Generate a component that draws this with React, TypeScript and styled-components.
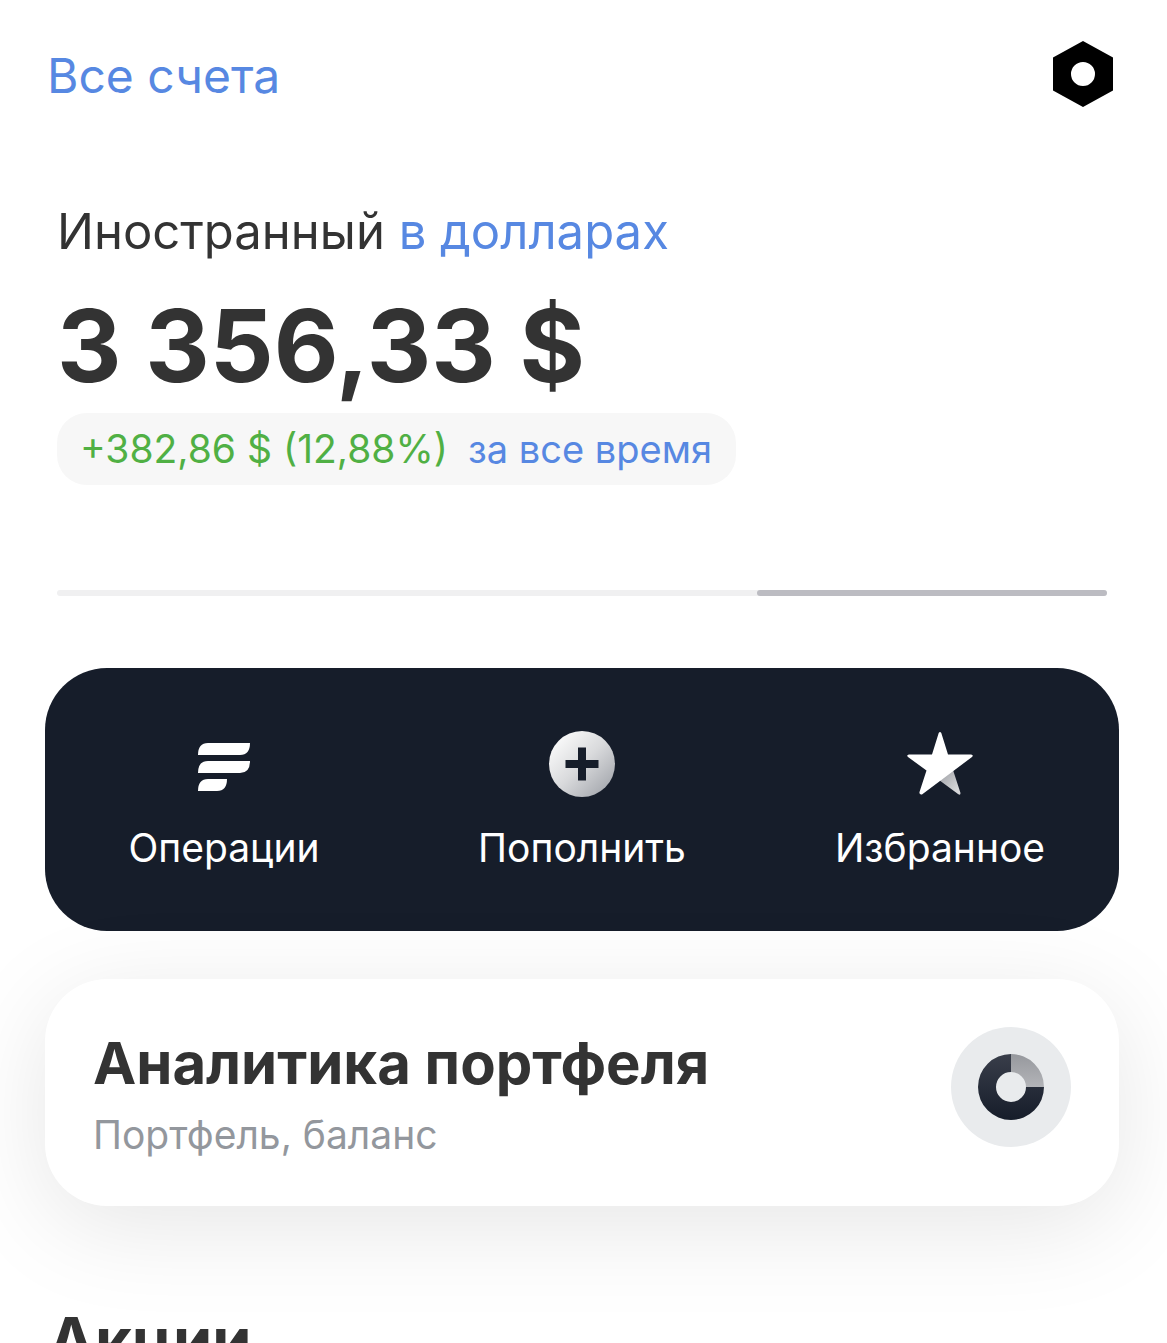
import React from "react";
import styled, { createGlobalStyle } from "styled-components";

const Global = createGlobalStyle`
  * { box-sizing: border-box; }
  html { height: 100%; overflow: hidden; }
  body { margin: 0; height: 100%; overflow: hidden; background: #fff; color: #333; font-family: Inter, "Liberation Sans", sans-serif; }
  h1, h2, p { margin: 0; }
  button { font: inherit; border: 0; padding: 0; background: none; cursor: pointer; }
`;

const Page = styled.main`
  padding: 40px 48px 0 45px;
`;

const TopBar = styled.header`
  display: flex;
  align-items: flex-start;
  justify-content: space-between;
  height: 68px;
  padding: 0 4px 0 2px;
`;

const LinkButton = styled.button`
  color: #5788e2;
`;

const BackButton = styled(LinkButton)`
  padding-top: 4px;
  && {
    font-size: 48px;
    line-height: 64px;
  }
`;

const IconButton = styled.button`
  display: flex;
`;

const Summary = styled.section`
  display: flex;
  flex-direction: column;
  align-items: flex-start;
  padding: 92px 12px 0;
`;

const Account = styled.p`
  font-size: 49px;
  line-height: 64px;
`;

const Balance = styled.h1`
  margin-top: 22px;
  font-size: 100px;
  line-height: 120px;
  font-weight: 700;
`;

const Gain = styled.div`
  display: flex;
  align-items: center;
  gap: 20px;
  height: 72px;
  margin-top: 7px;
  padding: 0 24px 0 23px;
  border-radius: 30px;
  background: #f7f7f7;
  color: #50b044;
  font-size: 39px;
  line-height: 48px;
`;

const Period = styled(LinkButton)`
  && { font-size: 38px; }
`;

const Pager = styled.div`
  display: grid;
  grid-template-columns: repeat(3, 1fr);
  height: 6px;
  margin: 105px 12px 0;
  border-radius: 3px;
  background: #f0f0f1;
`;

const PagerThumb = styled.span`
  grid-column: 3;
  border-radius: 3px;
  background: #bcbcc2;
`;

const Actions = styled.nav`
  display: grid;
  grid-template-columns: repeat(3, 1fr);
  margin-top: 72px;
  padding: 60px 0 59px;
  border-radius: 62px;
  background: #161d2a;
`;

const Action = styled.button`
  display: flex;
  flex-direction: column;
  align-items: center;
  gap: 24px;
  && {
    color: #fff;
    font-size: 39px;
    line-height: 48px;
  }
`;

const Card = styled.section`
  display: flex;
  align-items: flex-start;
  justify-content: space-between;
  margin-top: 48px;
  padding: 48px 48px 47px;
  border-radius: 62px;
  background: #fff;
  box-shadow: 0 20px 100px rgba(0, 0, 0, 0.1);
`;

const Title = styled.h2<{ $large?: boolean }>`
  font-size: ${(p) => (p.$large ? 63 : 58)}px;
  line-height: 72px;
  font-weight: 700;
`;

const Caption = styled.p`
  margin-top: 12px;
  color: #93979d;
  font-size: 39px;
  line-height: 48px;
`;

const Badge = styled.span`
  display: grid;
  place-items: center;
  width: 120px;
  height: 120px;
  border-radius: 50%;
  background: #e9ebed;
`;

const Stocks = styled.section`
  padding: 98px 3px 0;
`;

export default function App() {
  return (
    <>
      <Global />
      <Page>
        <TopBar>
          <BackButton>Все счета</BackButton>
          <IconButton aria-label="Настройки">
            <svg width="64" height="68" viewBox="0 0 64 68">
              <path fillRule="evenodd" d="M32 1 62 17.5V50.5L32 67 2 50.5V17.5ZM32 22a12 12 0 1 0 0 24 12 12 0 0 0 0-24Z" />
            </svg>
          </IconButton>
        </TopBar>
        <Summary>
          <Account>Иностранный <LinkButton>в долларах</LinkButton></Account>
          <Balance>3 356,33 $</Balance>
          <Gain>
            <span>+382,86 $ (12,88%)</span>
            <Period>за все время</Period>
          </Gain>
        </Summary>
        <Pager><PagerThumb /></Pager>
        <Actions>
          <Action>
            <svg width="72" height="72" viewBox="0 0 72 72" fill="#fff">
              <path d="M20 15H62Q62 27 52 27H10Q10 15 20 15ZM20 33H62Q62 45 52 45H10Q10 33 20 33ZM20 51H39Q39 63 29 63H10Q10 51 20 51Z" />
            </svg>
            Операции
          </Action>
          <Action>
            <svg width="72" height="72" viewBox="0 0 72 72">
              <defs>
                <linearGradient id="silver" x1="0" y1="0" x2="1" y2="1">
                  <stop offset="0.1" stopColor="#fbfbfb" />
                  <stop offset="0.5" stopColor="#d9dadc" />
                  <stop offset="0.9" stopColor="#a6a9af" />
                </linearGradient>
              </defs>
              <circle cx="36" cy="36" r="33" fill="url(#silver)" />
              <path d="M36 19.5V52.5M19.5 36H52.5" stroke="#161d2a" strokeWidth="8" />
            </svg>
            Пополнить
          </Action>
          <Action>
            <svg width="72" height="72" viewBox="0 0 72 72">
              <defs>
                <linearGradient id="fold" x1="0" y1="0" x2="1" y2="1">
                  <stop offset="0.1" stopColor="#a2a4a9" />
                  <stop offset="0.8" stopColor="#d5d6d8" />
                </linearGradient>
              </defs>
              <path d="M35 52 49 42 56.5 65Q56.5 68 54 66Z" fill="url(#fold)" />
              <path d="M34.7 5Q36 3 37.3 5L44 26.5H67Q70 27 68 29L18 66.5Q15 67 15.5 64L22.5 42.5 4 29Q2 27 5 26.5H28Z" fill="#fff" />
            </svg>
            Избранное
          </Action>
        </Actions>
        <Card>
          <div>
            <Title>Аналитика портфеля</Title>
            <Caption>Портфель, баланс</Caption>
          </div>
          <Badge>
            <svg width="66" height="66" viewBox="0 0 66 66">
              <defs>
                <linearGradient id="ring" x1="0" y1="0" x2="0" y2="1">
                  <stop offset="0" stopColor="#393e4a" />
                  <stop offset="1" stopColor="#161d2a" />
                </linearGradient>
                <linearGradient id="slice" x1="0" y1="0" x2="0" y2="1">
                  <stop offset="0" stopColor="#96989d" />
                  <stop offset="1" stopColor="#b3b4b8" />
                </linearGradient>
              </defs>
              <path d="M33 0A33 33 0 1 0 66 33H48A15 15 0 1 1 33 18Z" fill="url(#ring)" />
              <path d="M33 0A33 33 0 0 1 66 33H48A15 15 0 0 0 33 18Z" fill="url(#slice)" />
            </svg>
          </Badge>
        </Card>
        <Stocks><Title $large>Акции</Title></Stocks>
      </Page>
    </>
  );
}
